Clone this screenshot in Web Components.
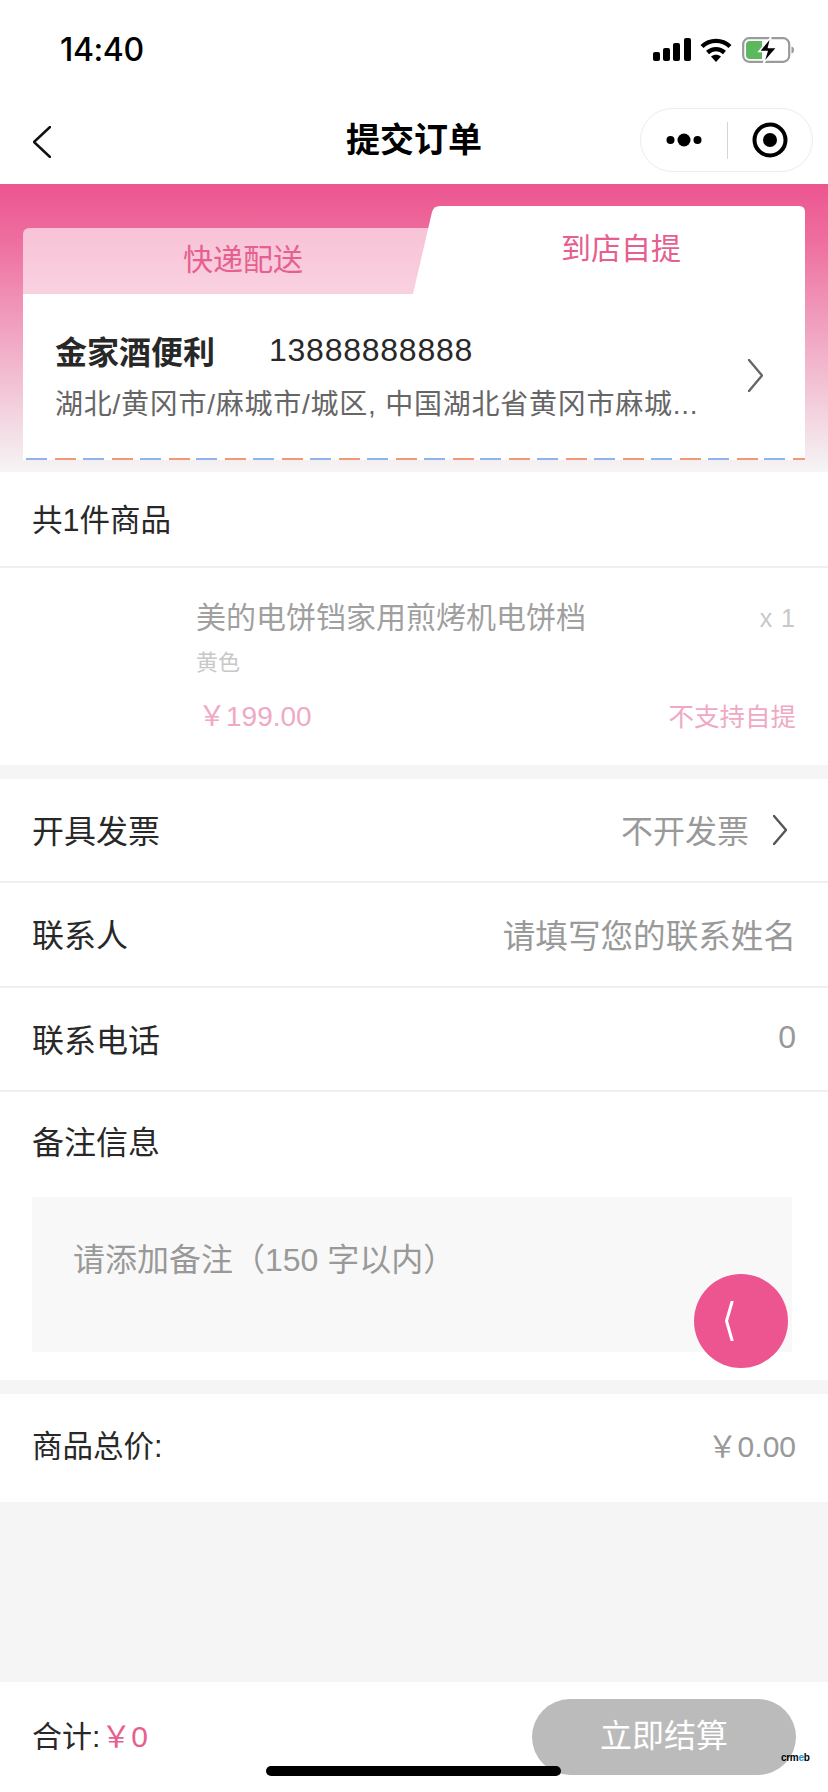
<!DOCTYPE html>
<html lang="zh"><head><meta charset="utf-8"><title>提交订单</title>
<style>
html,body{margin:0;padding:0;height:100%}
body{font-family:"Liberation Sans","Noto Sans CJK SC",sans-serif;color:#282828;background:#f5f5f5}
order-page{display:flex;flex-direction:column;width:828px;height:1792px;position:relative;overflow:hidden}
</style></head><body>
<order-page>
  <status-bar></status-bar>
  <nav-bar title="提交订单"></nav-bar>
  <order-hero></order-hero>
  <goods-card></goods-card>
  <form-row label="开具发票" value="不开发票" arrow h="104" bordered></form-row>
  <form-row label="联系人" value="请填写您的联系姓名" vs="32.6" h="105" bordered></form-row>
  <form-row label="联系电话" value="0" h="104" bordered></form-row>
  <remark-box></remark-box>
  <total-row></total-row>
  <pay-bar></pay-bar>
  <float-button></float-button>
</order-page>
<script>
const chev=(w,h,c,sw,dir)=>`<svg width="${w}" height="${h}" viewBox="0 0 ${w} ${h}" fill="none" stroke="${c}" stroke-width="${sw}" stroke-linecap="round" stroke-linejoin="round"><path d="${dir==='l'?`M${w-1} 1 L1 ${h/2} L${w-1} ${h-1}`:`M1 1 L${w-1} ${h/2} L1 ${h-1}`}"/></svg>`;
function def(name,css,html){
  customElements.define(name,class extends HTMLElement{
    connectedCallback(){
      if(this.shadowRoot)return;
      const r=this.attachShadow({mode:'open'});
      r.innerHTML=`<style>${css}</style>`+(typeof html==='function'?html(this):html);
    }
  });
}
def('status-bar',`
:host{display:flex;height:100px;flex:none;background:#fff;box-sizing:border-box;padding:0 33px 0 60px;justify-content:space-between;align-items:flex-start}
.t{font:500 32px/1 "Inter",sans-serif;color:#000;margin-top:34px;letter-spacing:-.4px}
.i{display:flex;margin-top:37px;gap:9px;align-items:center;height:25px}
svg{display:block}
`,`<div class="t">14:40</div><div class="i">
<svg width="38" height="23" viewBox="0 0 38 23" fill="#000"><rect x="0" y="14" width="7" height="9" rx="2"/><rect x="10" y="10" width="7" height="13" rx="2"/><rect x="20" y="5" width="7" height="18" rx="2"/><rect x="31" y="0" width="7" height="23" rx="2"/></svg>
<svg width="32" height="24" viewBox="0 0 32 24" fill="none" stroke="#000" stroke-width="4.4"><path d="M2 8.5C10 1 22 1 30 8.500"/><path d="M7.500 14.500C12.500 10 19.500 10 24.500 14.500"/><path d="M16 24L11 18.500C14 16.300 18 16.300 21 18.500Z" fill="#000" stroke="none"/></svg>
<svg style="margin-left:1px" width="53" height="26" viewBox="0 0 53 26"><rect x="1.200" y="1.200" width="46" height="23.600" rx="6" fill="#fff" stroke="#9a9a9a" stroke-width="2.200"/><path d="M4 8a4 4 0 0 1 4-4H20V22H8a4 4 0 0 1-4-4Z" fill="#5cb85c"/><path d="M49.500 9.500c2 .6 2.500 2 2.500 3.500s-.5 2.900-2.500 3.500Z" fill="#9a9a9a"/><path d="M29 0 17 14.500h8L21.500 26 35 10.500h-8.500Z" fill="#000" stroke="#fff" stroke-width="1.500"/></svg>
</div>`);
def('nav-bar',`
:host{display:block;height:84px;flex:none;background:#fff;position:relative}
.w{display:flex;align-items:center;height:80px;padding:0 15px 4px 33px;justify-content:space-between}
.b{width:18px;display:flex;margin-top:4px}
h1{position:absolute;left:0;right:0;top:13px;margin:0;text-align:center;font:700 34px/50px "Noto Sans CJK SC",sans-serif;color:#000}
.c{width:173px;height:64px;box-sizing:border-box;border:1.500px solid #ececec;border-radius:32px;display:flex;align-items:center;margin-top:0;background:#fff}
.d{width:86px;display:flex;justify-content:center}
.s{width:1px;height:37px;background:#d4d4d4}
.o{flex:1;display:flex;justify-content:center}
`,e=>`<div class="w"><div class="b">${chev(18,32,'#111',2.4,'l')}</div>
<div class="c"><div class="d"><svg width="36" height="14" viewBox="0 0 36 14" fill="#000"><circle cx="4.500" cy="7" r="4"/><circle cx="18" cy="7" r="6.500"/><circle cx="31.500" cy="7" r="4"/></svg></div><div class="s"></div><div class="o"><svg width="36" height="36" viewBox="0 0 36 36"><circle cx="18" cy="18" r="15.500" fill="none" stroke="#000" stroke-width="4"/><circle cx="18" cy="18" r="7" fill="#000"/></svg></div></div></div>
<h1>${e.getAttribute('title')}</h1>`);
def('order-hero',`
:host{display:block;height:288px;flex:none;box-sizing:border-box;padding:22px 23px 0 23px;background:linear-gradient(#ec5590 0%,#ee6f9f 20%,#f5f5f5 100%)}
.tabs{display:flex;align-items:flex-end;height:88px}
.off,.on{display:flex;justify-content:center;color:#e5608f;font-size:30px}
.off{width:412px;height:66px;flex:none;background:rgba(255,255,255,.6);border-radius:6px 0 0 0;box-sizing:border-box;padding-left:28px;line-height:64px}
.on{flex:1;height:88px;margin-left:-22px;padding-left:24px;box-sizing:border-box;background:#fff;clip-path:path("M0 88 L19 6 Q20.500 0 27 0 L386 0 Q392 0 392 6 L392 88 Z");line-height:86px}
.card{background:#fff;height:166px;box-sizing:border-box;position:relative;padding:0 42px 0 32px;display:flex;justify-content:space-between;align-items:center}
.info{min-width:0;flex:1;margin-top:-1px}
.top{display:flex;font-size:32px;line-height:48px;color:#282828;letter-spacing:.75px}
.top b{font:700 32px/48px "Noto Sans CJK SC",sans-serif;width:214px;letter-spacing:0}
.addr{font-size:28px;line-height:44px;color:#666;margin-top:9px;white-space:nowrap;width:650px;overflow:hidden;letter-spacing:.75px}
.arrow{display:flex;margin-top:-3px}
.dash{position:absolute;left:0;right:0;bottom:0;height:2px;background:repeating-linear-gradient(90deg,#fff 0 3px,#8fb4ec 3px 24px,#fff 24px 32px,#ee9a78 32px 53px,#fff 53px 56.800px)}
`,`<div class="tabs"><div class="off">快递配送</div><div class="on">到店自提</div></div>
<div class="card"><div class="info"><div class="top"><b>金家酒便利</b><span>13888888888</span></div><div class="addr">湖北/黄冈市/麻城市/城区, 中国湖北省黄冈市麻城...</div></div><div class="arrow">${chev(15,33,'#666',2.4,'r')}</div><div class="dash"></div></div>`);
def('goods-card',`
:host{display:block;flex:none;background:#fff;margin-bottom:14px;height:293px;position:relative}
.h{border-bottom:2px solid #efefef;box-sizing:border-box;height:96px;padding:0 32px;font-size:30.500px;line-height:96px;color:#282828}
.g{padding:28px 32px 0 196px;display:grid;grid-template-columns:1fr auto;color:#a0a0a0}
.n{font-size:30px;line-height:44px}
.q{font-size:25px;line-height:44px;color:#c8c8c8;letter-spacing:1px;justify-self:end}
.v{grid-column:1/3;font-size:22px;line-height:30px;color:#c8c8c8;margin-top:8px}
.p{font-size:28px;line-height:40px;color:#efa9c4;margin-top:19px;padding-left:2px}
.x{font-size:25.500px;line-height:40px;color:#efa9c4;margin-top:19px}
`,`<div class="h">共1件商品</div><div class="g"><div class="n">美的电饼铛家用煎烤机电饼档</div><div class="q">x 1</div><div class="v">黄色</div><div class="p">￥199.00</div><div class="x">不支持自提</div></div>`);
def('form-row',`
:host{display:flex;flex:none;background:#fff;box-sizing:border-box;padding:0 32px 3px 32px;justify-content:space-between;align-items:center;font-size:32px;color:#282828}
:host([bordered]){border-bottom:2px solid #efefef}
.r{display:flex;align-items:center;color:#999;gap:24px}
.a{display:flex;margin-right:9px;margin-top:2px}
`,e=>{e.style.height=e.getAttribute('h')+'px';const vs=e.getAttribute('vs');return `<div>${e.getAttribute('label')}</div><div class="r"><span${vs?` style="font-size:${vs}px"`:''}>${e.getAttribute('value')}</span>${e.hasAttribute('arrow')?`<span class="a">${chev(14,30,'#555',2.4,'r')}</span>`:''}</div>`});
def('remark-box',`
:host{display:block;flex:none;background:#fff;height:288px;box-sizing:border-box;padding:0 36px 28px 32px}
.l{font-size:32px;color:#282828;height:105px;line-height:102px}
.b{height:155px;background:#f8f8f8;padding:39px 41px;box-sizing:border-box;font-size:32px;line-height:48px;color:#999}
`,`<div class="l">备注信息</div><div class="b">请添加备注（150 字以内）</div>`);
def('total-row',`
:host{display:flex;flex:none;background:#fff;height:108px;margin-top:14px;box-sizing:border-box;padding:0 32px 8px 32px;justify-content:space-between;align-items:center;font-size:30px;color:#282828}
.l{font-size:30.500px}
.v{color:#999}
`,`<div class="l">商品总价:</div><div class="v">￥0.00</div>`);
def('pay-bar',`
:host{display:flex;flex:none;background:#fff;height:110px;margin-top:auto;box-sizing:border-box;padding:17px 32px 17px 32px;justify-content:space-between;align-items:flex-start;position:relative}
.s{font-size:30px;line-height:76px;color:#282828}
.s span{color:#e5608f;margin-left:1px}
.b{width:264px;height:76px;border-radius:38px;background:#bbb;color:#fff;font-size:32px;line-height:74px;text-align:center}
.home{position:absolute;left:266px;top:84px;width:295px;height:10px;border-radius:5px;background:#000}
.logo{position:absolute;left:781px;top:70px;font:700 10px/12px "Liberation Sans",sans-serif;color:#000;letter-spacing:-.3px}
.logo i{font-style:normal;color:#1496e0}
`,`<div class="s">合计:<span>￥0</span></div><div class="b">立即结算</div><div class="home"></div><div class="logo">crm<i>e</i>b</div>`);
def('float-button',`
:host{display:flex;position:absolute;left:694px;top:1274px;width:94px;height:94px;border-radius:50%;background:#ec5590;align-items:center;justify-content:center}
svg{display:block;margin-right:22px}
`,`<svg width="10" height="40" viewBox="0 0 10 40" fill="none" stroke="#fff" stroke-width="3" stroke-linecap="round"><path d="M7 1 L1.500 20 L7 39"/></svg>`);
def('order-page','',`<slot></slot>`);
</script>
</body></html>
